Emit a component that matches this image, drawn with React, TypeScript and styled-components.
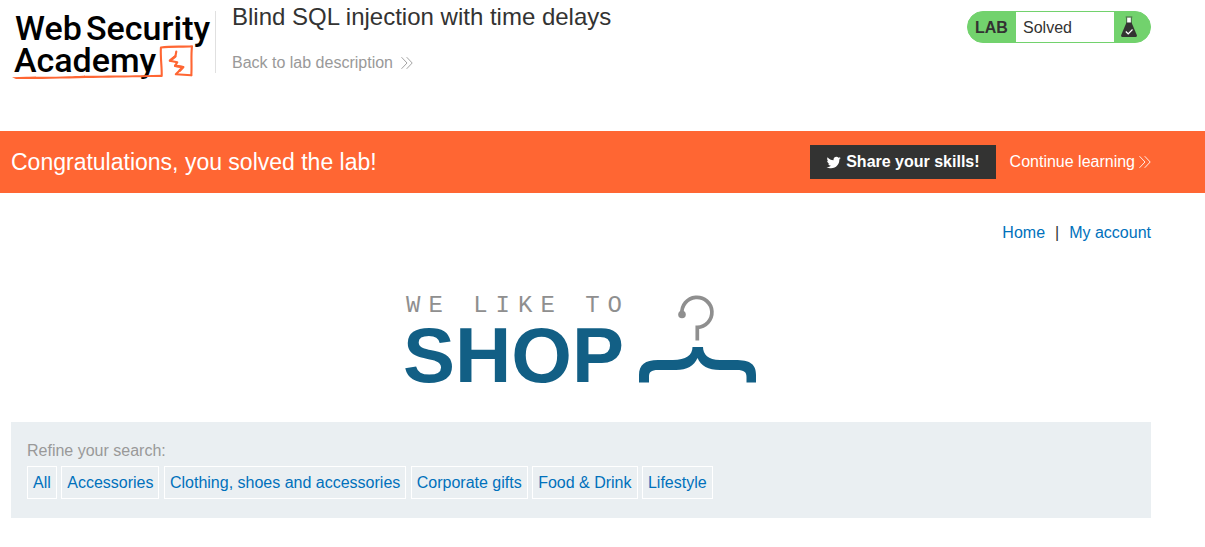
import React from 'react';
import styled, { createGlobalStyle } from 'styled-components';

const GlobalStyle = createGlobalStyle`
  *, *::before, *::after { box-sizing: border-box; }
  body {
    margin: 0;
    background: #fff;
    color: #333332;
    font-family: "Liberation Sans", Arial, Helvetica, sans-serif;
    font-size: 16px;
    line-height: 20px;
  }
`;

const Container = styled.div`
  width: 100%;
  padding: 0 54px 0 11px;
`;

const Header = styled(Container)`
  display: flex;
  align-items: flex-start;
  height: 131px;
`;

const LogoLink = styled.a`
  display: block;
  padding-top: 11px;
  svg { display: block; overflow: visible; }
`;

const TitleBlock = styled.div`
  flex: 1;
  display: flex;
  flex-direction: column;
  align-items: flex-start;
  gap: 20px;
  padding-top: 1px;
  padding-left: 16px;
`;

const Title = styled.h2`
  margin: 0;
  font-size: 24px;
  line-height: 32px;
  font-weight: 400;
`;

const Divider = styled.div`
  width: 1px;
  height: 62px;
  margin-top: 11px;
  background: #e0e0e0;
`;

const ArrowLink = styled.a<{ $color: string; $gap: number }>`
  display: inline-flex;
  align-items: center;
  gap: ${p => p.$gap}px;
  color: ${p => p.$color};
  text-decoration: none;
`;

const LabStatus = styled.div`
  display: flex;
  width: 184px;
  height: 32px;
  margin-top: 11px;
  border: 1px solid #72d26d;
  border-radius: 16px;
  overflow: hidden;
  background: #72d26d;
  line-height: 32px;
`;

const LabLabel = styled.span`
  width: 48px;
  padding-left: 7px;
  font-weight: 700;
`;

const LabState = styled.p`
  flex: 1;
  margin: 0;
  padding-left: 7px;
  background: #fff;
`;

const LabIcon = styled.span`
  width: 36px;
  padding: 4px 0 0 7px;
  svg { display: block; }
`;

const Banner = styled.section`
  background: #ff6633;
  color: #fff;
`;

const BannerRow = styled(Container)`
  display: flex;
  align-items: center;
  height: 62px;
`;

const BannerTitle = styled.h4`
  flex: 1;
  margin: 0;
  font-size: 23px;
  line-height: 32px;
  font-weight: 400;
`;

const ShareButton = styled.button`
  display: flex;
  align-items: center;
  gap: 5px;
  height: 34px;
  margin-right: 14px;
  padding: 0 16px;
  border: 0;
  background: #333332;
  color: #fff;
  font: inherit;
  font-weight: 700;
`;

const TopLinks = styled.nav`
  display: flex;
  justify-content: flex-end;
  gap: 10px;
  padding-top: 30px;
`;

const BlueLink = styled.a`
  color: #0071bc;
  text-decoration: none;
`;

const ShopLogo = styled.h1`
  display: flex;
  justify-content: center;
  margin: 52px 0 37px;
  font-weight: 400;
  svg { display: block; overflow: visible; }
`;

const Filters = styled.section`
  padding: 19px 16px;
  background: #eaeff2;
`;

const FilterLabel = styled.div`
  margin-bottom: 5px;
  color: #999;
`;

const FilterLink = styled(BlueLink)`
  display: inline-block;
  padding: 5px;
  border: 1px solid #fff;
  line-height: 21px;
  vertical-align: top;
`;

const categories = [
  'All',
  'Accessories',
  'Clothing, shoes and accessories',
  'Corporate gifts',
  'Food & Drink',
  'Lifestyle',
];

const DoubleArrow = () => (
  <svg width="12" height="14" viewBox="0 0 12 14" fill="none" stroke="currentColor" strokeWidth="0.9" aria-hidden="true">
    <path d="M0.5 1.2 6 7 0.5 12.8M5.7 1.2 11.2 7 5.7 12.8" />
  </svg>
);

const AcademyLogo = () => (
  <svg width="204" height="72" viewBox="0 0 204 72" role="img" aria-label="Web Security Academy">
    <g fill="#000" fontFamily="Roboto, sans-serif" fontWeight="500" fontSize="34">
      <text x="4" y="29">Web</text>
      <text x="75" y="29">Security</text>
      <text x="3" y="61">Academy</text>
    </g>
    <g fill="none" stroke="#ff6633" strokeLinejoin="round" strokeLinecap="round">
      <path d="M150.700 65C151 56 149.300 47 149.900 36.500 161 35.200 171 36 181 35.200 179.800 45 181 54 180.300 64.200" strokeWidth="2.100" />
      <path d="M165.300 40.500 164.500 45 158.700 49.700 166.300 51.300 164 54.900 172.300 56 164.800 63.300 180.300 64.300" strokeWidth="2.100" />
      <path d="M164.200 45.500 159.300 49.500M164.300 54.700 172 56.200 168.800 59.500" strokeWidth="2.600" />
    </g>
    <path d="M1 66.300C20 65.400 42 66.300 58 65.300S100 65 151 63.700L151 66C125 65.900 104 66.800 82 66.900S20 68.600 5 67.900Z" fill="#ff6633" />
  </svg>
);

const Flask = () => (
  <svg width="16" height="21" viewBox="0 0 16 21" aria-hidden="true">
    <path d="M6 1.500H10V7H6Z" fill="#fff" />
    <path d="M4.700 1H11.300M5.700 1.500V8M10.300 1.500V8" stroke="#333332" strokeWidth="0.700" fill="none" />
    <path d="M5.500 6.500H10.500L15.800 19Q16.300 21 14.500 21H1.500Q-.3 21 .2 19Z" fill="#333332" />
    <path d="M4.800 15.500 7.200 17.800 11.500 13.500" stroke="#fff" strokeWidth="1.200" fill="none" />
  </svg>
);

const Bird = () => (
  <svg width="15" height="13" viewBox="0 2 24 20" fill="currentColor" aria-hidden="true">
    <path d="M23.643 4.937c-.835.370-1.732.620-2.675.733.962-.576 1.700-1.490 2.048-2.578-.900.534-1.897.922-2.958 1.130-.850-.904-2.060-1.470-3.400-1.470-2.572 0-4.658 2.086-4.658 4.660 0 .364.042.718.120 1.060-3.873-.195-7.304-2.050-9.602-4.868-.400.690-.630 1.490-.630 2.342 0 1.616.823 3.043 2.072 3.878-.764-.025-1.482-.234-2.110-.583v.060c0 2.257 1.605 4.140 3.737 4.568-.392.106-.803.162-1.227.162-.300 0-.593-.028-.877-.082.593 1.850 2.313 3.198 4.352 3.234-1.595 1.250-3.604 1.995-5.786 1.995-.376 0-.747-.022-1.112-.065 2.062 1.323 4.510 2.093 7.140 2.093 8.570 0 13.255-7.098 13.255-13.254 0-.200-.005-.402-.014-.602.910-.658 1.700-1.477 2.323-2.410z" />
  </svg>
);

const ShopArt = () => (
  <svg width="352" height="90" viewBox="405 295 352 90" role="img" aria-label="We like to shop">
    <text x="406" y="312" fill="#8f8f8f" fontFamily="'Liberation Mono', monospace" fontSize="24" letterSpacing="8">WE LIKE TO</text>
    <text x="403" y="382" fill="#125f85" fontFamily="'Liberation Sans', Arial, sans-serif" fontWeight="700" fontSize="78">SHOP</text>
    <path d="M682 314A15 15 0 1 1 697.300 327.300V340.500" fill="none" stroke="#8f8f8f" strokeWidth="3.700" />
    <circle cx="682" cy="314.500" r="3.800" fill="#8f8f8f" />
    <path d="M692.500 347H703C703 354 708 360 720 360H735C750 360 756 364 756 375V382.500H746.500V377C746.500 372 744 370 737 370H720C708 370 701 366 697.500 358C694 366 687 370 676 370H658C651 370 649 372 649 377V382.500H639V375C639 365 645 360 658 360H673C686 360 692.500 355 692.500 347Z" fill="#125f85" />
  </svg>
);

export default function App() {
  return (
    <>
      <GlobalStyle />
      <Header as="header">
        <LogoLink href="#"><AcademyLogo /></LogoLink>
        <Divider />
        <TitleBlock>
          <Title>Blind SQL injection with time delays</Title>
          <ArrowLink href="#" $color="#999" $gap={8}>Back to lab description <DoubleArrow /></ArrowLink>
        </TitleBlock>
        <LabStatus>
          <LabLabel>LAB</LabLabel>
          <LabState>Solved</LabState>
          <LabIcon><Flask /></LabIcon>
        </LabStatus>
      </Header>
      <Banner>
        <BannerRow>
          <BannerTitle>Congratulations, you solved the lab!</BannerTitle>
          <ShareButton type="button"><Bird />Share your skills!</ShareButton>
          <ArrowLink href="#" $color="#fff" $gap={4}>Continue learning <DoubleArrow /></ArrowLink>
        </BannerRow>
      </Banner>
      <Container as="main">
        <TopLinks>
          <BlueLink href="#">Home</BlueLink>
          <span>|</span>
          <BlueLink href="#">My account</BlueLink>
        </TopLinks>
        <ShopLogo><ShopArt /></ShopLogo>
        <Filters>
          <FilterLabel id="refine">Refine your search:</FilterLabel>
          <div role="group" aria-labelledby="refine">
            {categories.map(name => (
              <React.Fragment key={name}>
                <FilterLink href="#">{name}</FilterLink>{' '}
              </React.Fragment>
            ))}
          </div>
        </Filters>
      </Container>
    </>
  );
}
